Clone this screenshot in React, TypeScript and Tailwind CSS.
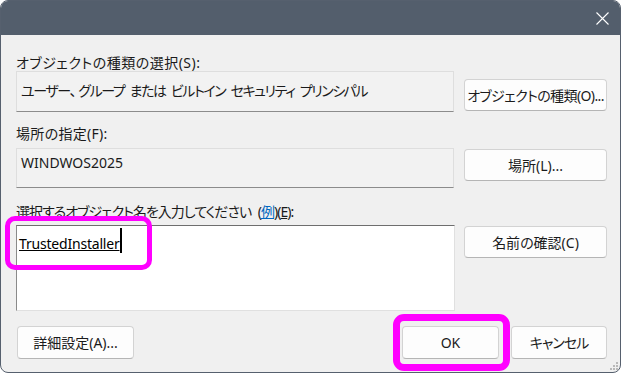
import React from 'react';

const font = "font-['Segoe_UI','Noto_Sans','Noto_Sans_CJK_JP',sans-serif] [font-feature-settings:'palt']";

function WinButton({ children, className = '' }: { children: React.ReactNode; className?: string }) {
  return (
    <div
      className={`flex items-center justify-center whitespace-nowrap rounded-[4px] border border-[#d3d3d3] border-b-[#b5b5b5] bg-[#fdfdfd] text-[14px] text-[#1b1b1b] ${className}`}
    >
      {children}
    </div>
  );
}

export default function App() {
  return (
    <div className={`w-[624px] h-[374px] bg-white ${font}`}>
      <div className="relative flex h-[373px] w-[621px] flex-col overflow-hidden rounded-[8px] border border-[#56606e] bg-[#f0f0f0]">
        {/* title bar */}
        <div className="flex h-[34px] shrink-0 items-center justify-end bg-[#535e6c] pr-[11px]">
          <svg width="13" height="13" viewBox="0 0 13 13" className="mt-[1px]">
            <path d="M0.5 0.5 L12.5 12.5 M12.5 0.5 L0.5 12.5" stroke="#ffffff" strokeWidth="1.1" />
          </svg>
        </div>

        <div className="flex flex-col pl-[15px] pr-[13px]">
          {/* object type */}
          <div className="mt-[19px] grid grid-cols-[438px_143px] gap-x-[10px]">
            <div className="flex flex-col">
              <div className="h-[17px] text-[14px] leading-[17px] tracking-[0.5px] text-[#1a1a1a]">オブジェクトの種類の選択(S):</div>
              <div className="flex h-[41px] items-center whitespace-nowrap border border-[#dedede] border-b-[#8c8c8c] bg-[#f2f2f2] pl-[4px] pb-[2px] text-[14px] tracking-[-1.4px] [word-spacing:3px] text-[#1a1a1a]">
                ユーザー、<span className="ml-[3px]">グループ または ビルトイン セキュリティ プリンシパル</span>
              </div>
            </div>
            <WinButton className="mt-[25px] h-[32px] tracking-[-0.6px]">オブジェクトの種類(O)...</WinButton>
          </div>

          {/* location */}
          <div className="mt-[13px] grid grid-cols-[438px_143px] gap-x-[10px]">
            <div className="flex flex-col">
              <div className="h-[17px] text-[14px] leading-[17px] tracking-[0.3px] text-[#1a1a1a]">場所の指定(F):</div>
              <div className="mt-[6px] flex h-[40px] items-start border border-[#dedede] border-b-[#8c8c8c] bg-[#f2f2f2] pl-[4px] pt-[3px] text-[14px] text-[#1a1a1a]">
                WINDWOS2025
              </div>
            </div>
            <WinButton className="mt-[24px] h-[32px]">場所(L)...</WinButton>
          </div>

          {/* object names */}
          <div className="mt-[15px] grid grid-cols-[439px_143px] gap-x-[9px]">
            <div className="flex flex-col">
              <div className="h-[17px] whitespace-nowrap text-[14px] leading-[17px] tracking-[-1px] [word-spacing:4px] text-[#1a1a1a]">
                選択するオブジェクト名を入力してください (<span className="text-[#0067c0] underline">例</span>)(<span className="underline">E</span>):
              </div>
              <div className="mt-[5px] flex h-[86px] items-start border border-[#e0e0e0] border-l-[#8a8a8a] border-t-[#6e6e6e] bg-white pl-[2px] pt-[2px]">
                <span className="mt-[7px] text-[14px] leading-[17px] tracking-[-0.2px] text-black underline">TrustedInstaller</span>
                <span className="h-[25px] w-[2px] bg-black" />
              </div>
            </div>
            <WinButton className="mt-[23px] h-[32px]">名前の確認(C)</WinButton>
          </div>

          {/* bottom buttons */}
          <div className="mt-[15px] flex items-center justify-between pl-[1px]">
            <WinButton className="h-[33px] w-[117px]">詳細設定(A)...</WinButton>
            <div className="flex gap-[12px]">
              <WinButton className="h-[33px] w-[97px] border-[#2a6fa8] border-b-[#1f5f96]">OK</WinButton>
              <WinButton className="h-[33px] w-[96px] tracking-[-1px]">キャンセル</WinButton>
            </div>
          </div>
        </div>

        {/* resize grip */}
        <svg width="10" height="10" viewBox="0 0 10 10" className="absolute bottom-[1px] right-[1px]">
          <rect x="7" y="1" width="2" height="2" fill="#b9b9b9" />
          <rect x="4" y="4" width="2" height="2" fill="#b9b9b9" />
          <rect x="7" y="4" width="2" height="2" fill="#b9b9b9" />
          <rect x="1" y="7" width="2" height="2" fill="#b9b9b9" />
          <rect x="4" y="7" width="2" height="2" fill="#b9b9b9" />
          <rect x="7" y="7" width="2" height="2" fill="#b9b9b9" />
        </svg>

        {/* highlight marks */}
        <div className="absolute left-[4px] top-[215px] h-[54px] w-[147px] rounded-[10px] border-[5px] border-[#ff00ff]" />
        <div className="absolute left-[392px] top-[313px] h-[57px] w-[117px] rounded-[11px] border-[7px] border-[#ff00ff]" />
      </div>
    </div>
  );
}
